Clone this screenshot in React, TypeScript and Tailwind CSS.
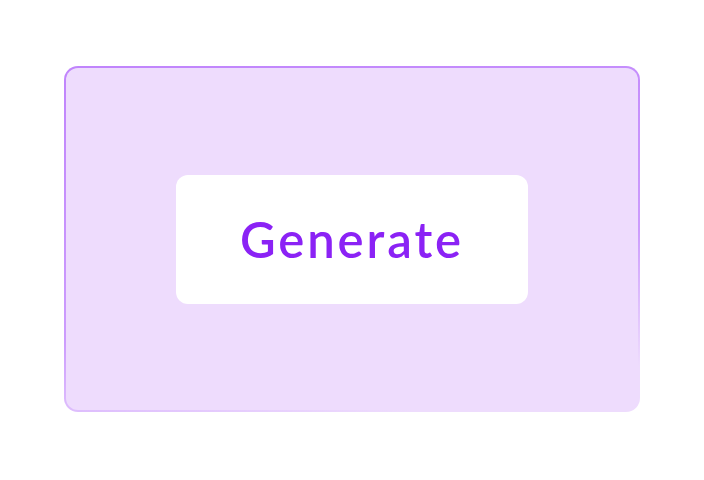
import React from "react";

export default function App() {
  return (
    <div className="w-[704px] h-[480px] bg-white pt-[66px] px-16">
      <div className="h-[346px] rounded-[14px] p-[2px] bg-[linear-gradient(169deg,#c084fc_0%,#cc9cfd_60%,#eedcfd_90%)]">
        <div className="h-full rounded-[12px] bg-[#eedcfd] flex items-center justify-center">
          <div className="w-[352px] h-[129px] bg-white rounded-[12px] flex items-center justify-center">
            <span
              className="text-[49px] font-semibold tracking-[0.06em] text-[#8b22f5] leading-none"
              style={{ fontFamily: "Lato, 'Open Sans', sans-serif" }}
            >
              Generate
            </span>
          </div>
        </div>
      </div>
    </div>
  );
}
